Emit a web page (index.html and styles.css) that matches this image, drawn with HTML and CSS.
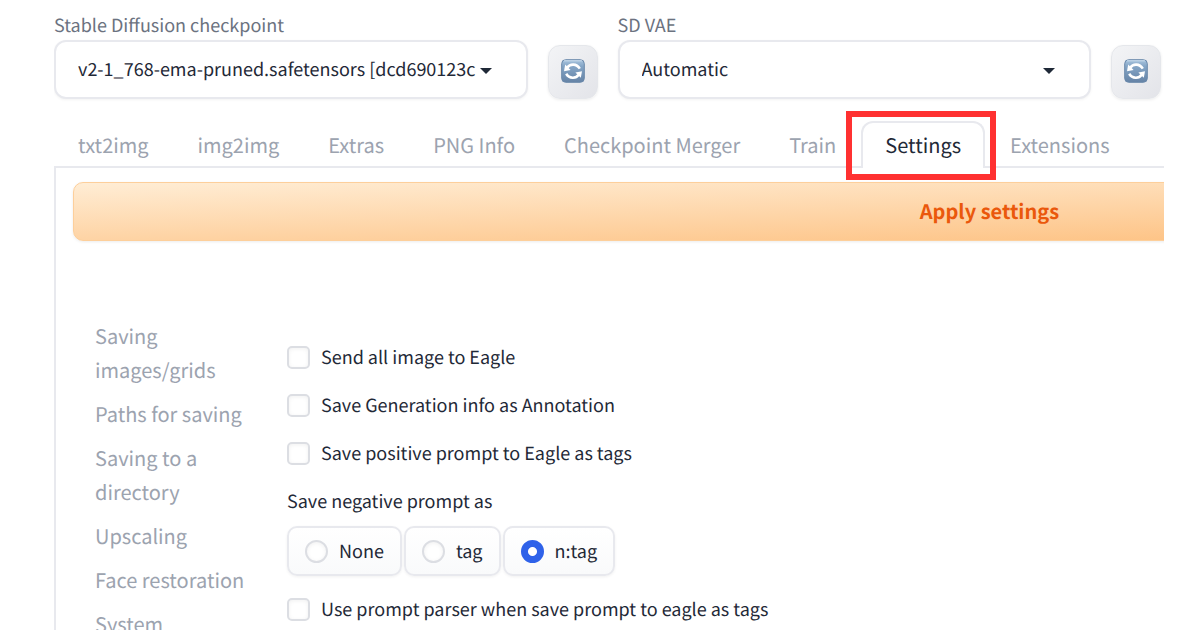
FILE: index.html
```html
<!DOCTYPE html>
<html lang="en">
<head>
<meta charset="utf-8">
<title>Stable Diffusion settings</title>
<link rel="stylesheet" href="styles.css">
</head>
<body>
<svg class="defs" aria-hidden="true">
  <defs>
    <linearGradient id="tile" x1="0" y1="0" x2="0" y2="1">
      <stop offset="0" stop-color="#a9c4de"/>
      <stop offset="0.3" stop-color="#84a5c6"/>
      <stop offset="1" stop-color="#6583a6"/>
    </linearGradient>
    <symbol id="refresh" viewBox="0 0 24 24">
      <rect x="0.7" y="0.7" width="22.6" height="22.6" rx="4" fill="url(#tile)" stroke="#6a89ab" stroke-width="1"/>
      <path d="M3 1.8H21" stroke="#c9dced" stroke-width="1" fill="none"/>
      <path d="M6.4 8.6C9 4.6 15.6 4.4 18.8 9.6" fill="none" stroke="#fff" stroke-width="2.6"/>
      <path d="M17.6 15.8C15 19.8 8.4 20 5.2 14.8" fill="none" stroke="#fff" stroke-width="2.6"/>
      <path d="M4.2 5.6L3 12.2L9.6 11Z" fill="#fff"/>
      <path d="M19.8 18.8L21 12.2L14.4 13.4Z" fill="#fff"/>
    </symbol>
  </defs>
</svg>
<main class="app">
  <div class="quick">
    <div class="field">
      <label for="checkpoint">Stable Diffusion checkpoint</label>
      <div class="picker">
        <select id="checkpoint"><option>v2-1_768-ema-pruned.safetensors [dcd690123c</option></select>
        <svg class="arrow" viewBox="0 0 12 6"><path d="M0 0H12L6 6Z"/></svg>
      </div>
    </div>
    <button class="refresh" type="button" aria-label="Refresh checkpoints"><svg><use href="#refresh"/></svg></button>
    <div class="field">
      <label for="vae">SD VAE</label>
      <div class="picker">
        <select id="vae"><option>Automatic</option></select>
        <svg class="arrow" viewBox="0 0 12 6"><path d="M0 0H12L6 6Z"/></svg>
      </div>
    </div>
    <button class="refresh" type="button" aria-label="Refresh VAE list"><svg><use href="#refresh"/></svg></button>
  </div>

  <nav class="tabs">
    <button type="button">txt2img</button>
    <button type="button">img2img</button>
    <button type="button">Extras</button>
    <button type="button">PNG Info</button>
    <button type="button">Checkpoint Merger</button>
    <button type="button">Train</button>
    <button type="button" class="selected">Settings</button>
    <button type="button">Extensions</button>
  </nav>

  <section class="panel">
    <button class="apply" type="button">Apply settings</button>
    <div class="columns">
      <nav class="sections">
        <button type="button">Saving images/grids</button>
        <button type="button">Paths for saving</button>
        <button type="button">Saving to a directory</button>
        <button type="button">Upscaling</button>
        <button type="button">Face restoration</button>
        <button type="button">System</button>
      </nav>
      <form class="options">
        <label class="check"><input type="checkbox">Send all image to Eagle</label>
        <label class="check"><input type="checkbox">Save Generation info as Annotation</label>
        <label class="check"><input type="checkbox">Save positive prompt to Eagle as tags</label>
        <fieldset>
          <legend>Save negative prompt as</legend>
          <div class="choices">
            <label><input type="radio" name="negative">None</label>
            <label><input type="radio" name="negative">tag</label>
            <label><input type="radio" name="negative" checked>n:tag</label>
          </div>
        </fieldset>
        <label class="check"><input type="checkbox">Use prompt parser when save prompt to eagle as tags</label>
      </form>
    </div>
  </section>
</main>
</body>
</html>
```
FILE: styles.css
```css
* { box-sizing: border-box; }

body {
  margin: 0;
  height: 100vh;
  overflow: hidden;
  background: #fff;
  color: #1f2937;
  font-family: "Noto Sans CJK JP", "Noto Sans", sans-serif;
  font-size: 18px;
  text-rendering: geometricPrecision;
}

button, select, input { font: inherit; color: inherit; margin: 0; text-rendering: inherit; }
button { cursor: pointer; }

.defs { position: absolute; width: 0; height: 0; }

.app {
  display: flex;
  flex-direction: column;
  height: 100%;
  margin: 0 36px 0 54px;
  padding-top: 13px;
  overflow: hidden;
}

.quick {
  display: grid;
  grid-template-columns: 1fr 50px 1fr 50px;
  gap: 20px;
  align-items: end;
  padding-right: 3px;
}

.field { display: flex; flex-direction: column; gap: 3px; min-width: 0; }
.field > label { line-height: 24px; color: #6b7280; }

.picker { position: relative; }
.picker select {
  display: block;
  width: 100%;
  height: 59px;
  padding: 0 50px 2px 22px;
  appearance: none;
  border: 2px solid #e8e9ee;
  border-radius: 12px;
  background: #fff;
  box-shadow: 0 1px 3px rgba(0, 0, 0, 0.05);
}
.arrow {
  position: absolute;
  top: 28px;
  right: 36px;
  width: 12px;
  height: 6px;
  fill: #1f2937;
  pointer-events: none;
}

.refresh {
  display: grid;
  place-items: center;
  height: 54px;
  padding: 0 0 2px;
  border: 1px solid #e5e7eb;
  border-radius: 12px;
  background: linear-gradient(to bottom right, #f3f4f6, #e3e4e9);
  box-shadow: 0 1px 3px rgba(0, 0, 0, 0.08);
}
.refresh svg { width: 24px; height: 24px; }

.tabs {
  display: flex;
  gap: 1px;
  margin-top: 22px;
  border-bottom: 2px solid #e8e9ee;
}
.tabs button {
  flex: none;
  height: 47px;
  margin-bottom: -2px;
  padding: 0 22px 2px;
  border: 2px solid transparent;
  border-bottom: 0;
  border-radius: 12px 12px 0 0;
  background: none;
  color: #9ca3af;
  font-size: 20px;
}
.tabs .selected {
  position: relative;
  border-color: #e8e9ee;
  background: #fff;
  color: #1f2937;
}
.tabs .selected::after {
  content: "";
  position: absolute;
  inset: -12px -13px -12px -17px;
  border: 6px solid #ff3131;
}

.panel {
  flex: 1;
  padding: 14px 0 0 17px;
  border-left: 2px solid #e8e9ee;
}

.apply {
  width: 168%;
  height: 59px;
  padding: 0 0 2px;
  border: 1px solid #fdcf9b;
  border-radius: 10px;
  background: linear-gradient(to bottom right, #ffedd5, #fdba74);
  box-shadow: 0 1px 3px rgba(0, 0, 0, 0.08);
  color: #ea580c;
  font-size: 20px;
  font-weight: 600;
}

.columns {
  display: flex;
  gap: 36px;
  padding: 78px 0 0 22px;
}
.sections {
  display: flex;
  flex: none;
  flex-direction: column;
  gap: 10px;
  width: 156px;
}
.sections button {
  padding: 0;
  border: 0;
  background: none;
  color: #9ca3af;
  font-size: 20px;
  line-height: 34px;
  text-align: left;
}

.options { padding-top: 25px; }
.check {
  display: flex;
  align-items: center;
  gap: 11px;
  height: 26px;
  margin-bottom: 22px;
}
.options input {
  flex: none;
  width: 23px;
  height: 23px;
  appearance: none;
  border: 2px solid #dcdee3;
  border-radius: 5px;
  background: #fff;
  box-shadow: inset 0 1px 4px rgba(0, 0, 0, 0.06);
}

fieldset { margin: 0; padding: 0; border: 0; }
legend { padding: 0; line-height: 26px; }
.choices { display: flex; gap: 2px; margin: 12px 0 20px; }
.choices label {
  display: flex;
  align-items: center;
  gap: 11px;
  height: 50px;
  padding: 0 16px;
  border: 2px solid #e8e9ee;
  border-radius: 10px;
  background: linear-gradient(#fff, #f9fafb);
  box-shadow: 0 1px 3px rgba(0, 0, 0, 0.06);
}
.options .choices input { border-radius: 50%; }
.options .choices input:checked {
  border-color: #2f62e9;
  background: radial-gradient(circle, #fff 4px, #2f62e9 5px);
  box-shadow: none;
}
```
